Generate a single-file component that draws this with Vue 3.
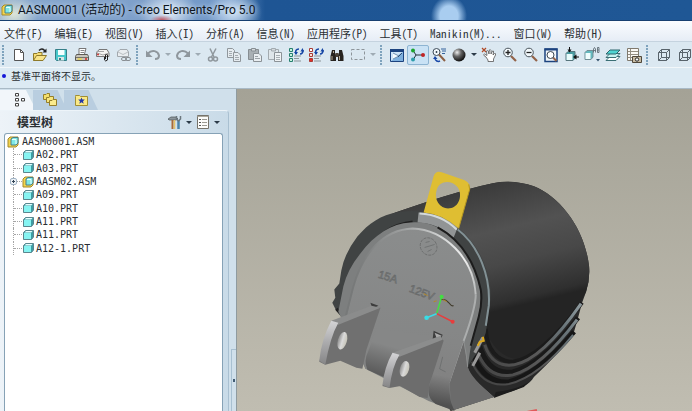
<script setup>
const menus = ['文件(F)', '编辑(E)', '视图(V)', '插入(I)', '分析(A)', '信息(N)', '应用程序(P)', '工具(T)', 'Manikin(M)...', '窗口(W)', '帮助(H)']

const fileTools = [
  ['new', '新建'], ['open', '打开'], ['save', '保存'], ['print', '打印'], ['mail', '发送邮件'], ['link', '发送链接'],
]
const editTools = [
  ['cut', '剪切'], ['copy', '复制'], ['paste', '粘贴'], ['pastex', '选择性粘贴'],
  ['regen', '再生'], ['regenm', '再生管理器'], ['find', '查找'], ['select', '选取'],
]
const viewTools = [
  ['repaint', '重画'], ['spin', '旋转中心'], ['orient', '定向模式'], ['shade', '外观库'],
]
const zoomTools = [
  ['pan', '平移'], ['zoomin', '放大'], ['zoomout', '缩小'], ['refit', '重新调整'],
  ['reorient', '重定向'], ['saved', '已命名视图'], ['layers', '层'], ['manager', '视图管理器'],
]

const parts = [
  { name: 'A02.PRT' }, { name: 'A03.PRT' }, { name: 'AASM02.ASM', asm: true },
  { name: 'A09.PRT' }, { name: 'A10.PRT' }, { name: 'A11.PRT' }, { name: 'A11.PRT' }, { name: 'A12-1.PRT' },
]
</script>

<template>
  <div class="window">
    <svg class="defs" aria-hidden="true">
      <symbol id="asm" viewBox="0 0 12 12">
        <path d="M1 3 3 1H11V9L9 11H1Z" fill="#f2d44c" stroke="#a58a2c" />
        <path d="M4 3 6 1.500H11V7L9 9H4Z" fill="#7fe9e6" stroke="#4a7f86" />
        <path d="M5 3.500H9V8" fill="none" stroke="#e8ffff" />
      </symbol>
      <symbol id="prt" viewBox="0 0 12 12">
        <path d="M1.500 3.500 3.500 1.500H11.500V8L9.500 10.500H1.500Z" fill="#3f9ca3" stroke="#5b868e" />
        <path d="M2 4H9V10H2Z" fill="#86f4f2" />
        <path d="M2.500 3.500 4 2H10.500L9.200 3.500Z" fill="#e4ffff" />
      </symbol>
      <symbol id="new" viewBox="0 0 16 16">
        <path d="M3.500 2.500H9.500L12.500 5.500V13.500H3.500Z" fill="#fff" stroke="#555" />
        <path d="M9.500 2.500V5.500H12.500" fill="none" stroke="#555" />
      </symbol>
      <symbol id="open" viewBox="0 0 16 16">
        <path d="M1.500 13.500V6.500H5L6 5.500H10V8" fill="#f6dd74" stroke="#8e7a2a" />
        <path d="M1.500 13.500 4.500 8.500H14.500L11 13.500Z" fill="#f8e489" stroke="#8e7a2a" />
        <path d="M7 3.500C9 1.500 11 1.500 13 4" fill="none" stroke="#222" stroke-width="1.500" />
        <path d="M14.500 1.500V5.500H10.500Z" fill="#222" />
      </symbol>
      <symbol id="save" viewBox="0 0 16 16">
        <path d="M2.500 2.500H13.500V13.500H3.500L2.500 12.500Z" fill="#47c8cb" stroke="#367f88" />
        <path d="M5 3H11.500V8H5Z" fill="#f4ffff" />
        <path d="M5 10H11V13.500H5Z" fill="#dce5e6" />
        <path d="M6 11H8V13H6Z" fill="#367f88" />
      </symbol>
      <symbol id="print" viewBox="0 0 16 16">
        <path d="M5 7V1.500H12L10.500 7" fill="#fff" stroke="#777" />
        <path d="M6.500 3.500H10.500M6.500 5.500H10" stroke="#888" />
        <path d="M2.500 7.500H13.500L14.500 9.500V13.500H1.500V9.500Z" fill="#c8c5bc" stroke="#5c5a55" />
        <path d="M2 10.500H14" stroke="#77736a" />
        <path d="M3.500 12H8" stroke="#e9d452" stroke-width="1.500" />
        <path d="M11 12H13" stroke="#d22" stroke-width="1.500" />
      </symbol>
      <symbol id="mail" viewBox="0 0 16 16">
        <path d="M1.500 9.500V6L4 2.500H12L14 6V9.500Z" fill="#f2f2f0" stroke="#777" />
        <path d="M2 6 8 8 14 6M1.500 4.500H9" fill="none" stroke="#a6a6a6" />
        <path d="M9.500 10V13Q10.500 15 12.500 13V8Q11.500 6 10.500 8V12" fill="none" stroke="#222" />
        <circle cx="3" cy="7.500" r="1" fill="#c33" />
      </symbol>
      <symbol id="link" viewBox="0 0 16 16">
        <path d="M1.500 9.500V5L4 2.500H11L12.500 5V9.500Z" fill="#e9edf0" stroke="#a2a8ad" />
        <path d="M2 5 7 7.500 12 5" fill="none" stroke="#b9bfc3" />
        <rect x="5.500" y="10.500" width="5" height="3" rx="1.500" fill="none" stroke="#898e92" />
        <rect x="9.500" y="10.500" width="5" height="3" rx="1.500" fill="none" stroke="#898e92" />
      </symbol>
      <symbol id="undo" viewBox="0 0 16 16">
        <path d="M3 6.500C7 2 13 4 14 8.500 14 11 12 12 10 12" fill="none" stroke="#8f979d" stroke-width="2" />
        <path d="M1 3.500V10H7.500Z" fill="#8f979d" />
      </symbol>
      <symbol id="redo" viewBox="0 0 16 16">
        <path d="M13 6.500C9 2 3 4 2 8.500 2 11 4 12 6 12" fill="none" stroke="#8f979d" stroke-width="2" />
        <path d="M15 3.500V10H8.500Z" fill="#8f979d" />
      </symbol>
      <symbol id="cut" viewBox="0 0 16 16">
        <path d="M5 1.500 9 10M11 1.500 6.500 10" stroke="#8f979d" stroke-width="1.500" />
        <circle cx="5.500" cy="12" r="2" fill="none" stroke="#8f979d" stroke-width="1.500" />
        <circle cx="10.500" cy="12" r="2" fill="none" stroke="#8f979d" stroke-width="1.500" />
      </symbol>
      <symbol id="copy" viewBox="0 0 16 16">
        <path d="M1.500 1.500H6.500L8.500 3.500V10.500H1.500Z" fill="#e6ecf0" stroke="#90979c" />
        <path d="M7.500 5.500H12L14.500 8V14.500H7.500Z" fill="#e6ecf0" stroke="#90979c" />
        <path d="M3 4.500H6M3 6.500H6M3 8.500H6M9 8.500H12M9 10.500H13M9 12.500H13" stroke="#a5acb1" />
      </symbol>
      <symbol id="paste" viewBox="0 0 16 16">
        <path d="M1.500 2.500H11.500V12.500H1.500Z" fill="#a9b0b4" stroke="#878e93" />
        <path d="M4.500 1.500H8.500V4H4.500Z" fill="#d5dade" stroke="#878e93" />
        <path d="M6.500 6.500H12L14.500 9V14.500H6.500Z" fill="#e9eef1" stroke="#8b9297" />
        <path d="M8 9.500H11M8 11.500H13" stroke="#9ca3a8" />
      </symbol>
      <symbol id="pastex" viewBox="0 0 16 16">
        <path d="M1.500 2.500H11.500V12.500H1.500Z" fill="#dfe6ea" stroke="#a3abb0" />
        <path d="M4.500 1.500H8.500V4H4.500Z" fill="#d5dade" stroke="#a3abb0" />
        <path d="M7.500 5.500H14.500V14.500H7.500Z" fill="#eef2f4" stroke="#8b9297" />
        <path d="M9 8.500H13M9 10.500H13M9 12.500H13" stroke="#a9b0b4" />
      </symbol>
      <symbol id="regen" viewBox="0 0 16 16">
        <path d="M1.500 1.500H4.500V4.500H1.500ZM1.500 6.500H4.500V9.500H1.500ZM1.500 11.500H4.500V14.500H1.500Z" fill="#c8f1df" stroke="#26806f" />
        <path d="M6 9H13M6 11.500H11M6 14H13" stroke="#8d9599" />
        <path d="M8 7C7 4 8 2 11 2M15 3C15 6 14 7 12 7" fill="none" stroke="#1646a5" stroke-width="1.600" />
        <path d="M6 5H10L8 8ZM12.500 4.500H16L14.500 1Z" fill="#1646a5" />
      </symbol>
      <symbol id="regenm" viewBox="0 0 16 16">
        <path d="M1.500 1.500H4.500V4.500H1.500Z" fill="#fff" stroke="#aa3b34" />
        <path d="M1.500 6.500H4.500V9.500H1.500Z" fill="#fbe0d9" stroke="#aa3b34" />
        <path d="M1.500 11.500H4.500V14.500H1.500Z" fill="#e42e27" stroke="#aa3b34" />
        <path d="M6 9H13M6 11.500H11M6 14H13" stroke="#8d9599" />
        <path d="M8 7C7 4 8 2 11 2M15 3C15 6 14 7 12 7" fill="none" stroke="#1646a5" stroke-width="1.600" />
        <path d="M6 5H10L8 8ZM12.500 4.500H16L14.500 1Z" fill="#1646a5" />
      </symbol>
      <symbol id="find" viewBox="0 0 16 16">
        <path d="M3 3H6V6L7 8V14H1.500V9ZM10 3H13L14.500 9V14H9V8L10 6Z" fill="#27231f" />
        <path d="M6.500 6H9.500V10H6.500Z" fill="#4b4238" />
        <path d="M3 9V13M10.500 9V13M4.500 4V6" stroke="#b8ab93" />
      </symbol>
      <symbol id="select" viewBox="0 0 16 16">
        <path d="M1.500 2.500H14.500V12.500H1.500Z" fill="none" stroke="#8d959a" stroke-dasharray="3 2" />
      </symbol>
      <symbol id="repaint" viewBox="0 0 16 16">
        <path d="M1.500 2.500H14.500V14.500H1.500Z" fill="#cfe4f7" stroke="#1c437f" />
        <path d="M1 2H15V5H1Z" fill="#1c437f" />
        <path d="M2 14 12 6 14 5V14Z" fill="#7eb0de" />
        <path d="M4 6 10 9 4 12" fill="#f6fbff" stroke="#6f8faf" />
        <path d="M9 10 13 6" stroke="#2e4c71" />
      </symbol>
      <symbol id="spin" viewBox="0 0 16 16">
        <path d="M3 3.500 6 8 3 13M6 8H13" fill="none" stroke="#28343c" />
        <circle cx="3" cy="3.500" r="2" fill="#1aa42d" />
        <circle cx="3" cy="12.500" r="2" fill="#2d9daa" />
        <circle cx="13" cy="8" r="2" fill="#c02425" />
      </symbol>
      <symbol id="orient" viewBox="0 0 16 16">
        <circle cx="5.500" cy="5" r="3.500" fill="#f2f8fc" stroke="#3e4c59" />
        <path d="M5.500 4V6M4.500 5H6.500" stroke="#3e4c59" />
        <path d="M8 7.500 14 14" stroke="#8c6044" stroke-width="2" />
        <path d="M10 2H15M11 4H15M11 6.500H14" stroke="#35639c" />
        <path d="M4 11C4 14 7 15 9 14" fill="none" stroke="#1747a8" stroke-width="1.500" />
        <path d="M2 12 4 9 6.500 12Z" fill="#1747a8" />
      </symbol>
      <radialGradient id="ballfill" cx=".35" cy=".3" r=".7">
        <stop offset="0" stop-color="#eee" /><stop offset=".45" stop-color="#666" /><stop offset="1" stop-color="#111" />
      </radialGradient>
      <symbol id="shade" viewBox="0 0 16 16"><circle cx="8" cy="8" r="6.500" fill="url(#ballfill)" /></symbol>
      <symbol id="pan" viewBox="0 0 16 16">
        <path d="M1 1 5 5M5 1 1 5" stroke="#b04a26" stroke-width="1.200" />
        <path d="M5 10 3 8.500Q2 7.500 3.500 7L6 8.500 5.500 4Q6.500 3 7.200 4L8 7 8.300 3Q9.500 2 10 3.500V7L11.500 4Q12.700 3.500 12.600 5L12 8 13.500 6.500Q15 6 14.500 8L12.500 12V14.500H7V13Z" fill="#fff" stroke="#555" stroke-width=".8" />
      </symbol>
      <symbol id="zoomin" viewBox="0 0 16 16">
        <path d="M9 9 14 14" stroke="#936349" stroke-width="2.200" />
        <circle cx="6" cy="5.500" r="4.300" fill="#f3f9fc" stroke="#4a545c" />
        <path d="M3.500 5.500H8.500M6 3V8" stroke="#222" stroke-width="1.300" />
      </symbol>
      <symbol id="zoomout" viewBox="0 0 16 16">
        <path d="M9 9 14 14" stroke="#936349" stroke-width="2.200" />
        <circle cx="6" cy="5.500" r="4.300" fill="#f3f9fc" stroke="#4a545c" />
        <path d="M3.500 5.500H8.500" stroke="#222" stroke-width="1.300" />
      </symbol>
      <symbol id="refit" viewBox="0 0 16 16">
        <path d="M2 2H14V14.500H2Z" fill="#f1f6fa" stroke="#1c437f" stroke-width="1.500" />
        <path d="M1.500 2.500H14.500" stroke="#1c437f" stroke-width="2" />
        <path d="M9.500 10 13.500 14" stroke="#936349" stroke-width="2" />
        <circle cx="7.500" cy="8" r="3.500" fill="#fff" stroke="#3b4651" />
      </symbol>
      <symbol id="reorient" viewBox="0 0 16 16">
        <path d="M2 6.500 4 4.500H11V11L9 13.500H2Z" fill="#4a9ca2" stroke="#57757c" />
        <path d="M2.500 7H8.500V13H2.500Z" fill="#e8fbfb" />
        <path d="M5.500 0V3M15 10H12" stroke="#111" />
        <path d="M3.500 2.500H7.500L5.500 5.500ZM12.500 7.500V12.500L9 10Z" fill="#111" />
      </symbol>
      <symbol id="saved" viewBox="0 0 16 16">
        <path d="M1 5.500 3 3.500H9V10L7 12.500H1Z" fill="#63b9be" stroke="#728c93" />
        <path d="M1.500 6H6.500V12H1.500Z" fill="#f0fdfd" />
        <path d="M9.500 5.500V2L10.500 .500 11.500 2V5.500M9.500 3.500H11.500M13.500 .500V5.500H15V3H13.500M13.500 .500H15V3" fill="none" stroke="#54616a" stroke-width=".8" />
        <path d="M12 12H16L14 14.500Z" fill="#35536c" />
      </symbol>
      <symbol id="layers" viewBox="0 0 16 16">
        <path d="M1 13.500 5 9.500H15L11 13.500Z" fill="#fff" stroke="#3b6f75" />
        <path d="M1 10.500 5 6.500H15L11 10.500Z" fill="#c6f3f1" stroke="#3b6f75" />
        <path d="M1 7 5 3H15L11 7Z" fill="#4fd4d1" stroke="#2e666c" />
      </symbol>
      <symbol id="manager" viewBox="0 0 16 16">
        <path d="M1.500 1.500H12.500V13.500H1.500Z" fill="#fbfaf6" stroke="#807a6e" />
        <path d="M2 4.500H12M2 7.500H12M2 10.500H12M4.500 2V13" stroke="#948e82" />
        <path d="M6.500 9.500H15.500V15.500H6.500Z" fill="#c9bda4" stroke="#50483b" />
        <circle cx="11" cy="12.500" r="1.700" fill="#fff" stroke="#222" />
      </symbol>
      <symbol id="wire" viewBox="0 0 16 16">
        <path d="M2.500 5.500H10.500V13.500H2.500ZM5.500 2.500H13.500V10.500H5.500ZM2.500 5.500 5.500 2.500M10.500 5.500 13.500 2.500M10.500 13.500 13.500 10.500M2.500 13.500 5.500 10.500" fill="none" stroke="#58636b" />
      </symbol>
      <symbol id="tree" viewBox="0 0 16 16">
        <path d="M4.500 1.500H7.500V4H4.500ZM4.500 6.500H7.500V9H4.500ZM4.500 11.500H7.500V14H4.500ZM10.500 6.500H13.500V9H10.500Z" fill="#fff" stroke="#444" />
      </symbol>
      <symbol id="folders" viewBox="0 0 16 16">
        <path d="M1.500 2.500H4L5 1.500H7.500V7.500H1.500Z" fill="#f4df6a" stroke="#957f2c" />
        <path d="M4.500 5.500H7L8 4.500H11.500V10.500H4.500Z" fill="#f8e67c" stroke="#957f2c" />
        <path d="M7.500 8.500H10L11 7.500H14.500V13.500H7.500Z" fill="#fbeb8d" stroke="#957f2c" />
      </symbol>
      <symbol id="fav" viewBox="0 0 16 16">
        <path d="M2.500 4.500V3.500H6.500L7.500 4.500H14.500V13.500H2.500Z" fill="#fae987" stroke="#a08e35" />
        <path d="M8.500 5.500 9.400 7.600H11.800L10 9.200 10.700 11.700 8.500 10.300 6.300 11.700 7 9.200 5.200 7.600H7.600Z" fill="#2338a8" />
      </symbol>
      <symbol id="settings" viewBox="0 0 16 16">
        <path d="M1 5 4 3H9L11 5 9 6H2Z" fill="#8d969c" stroke="#4b5358" stroke-width=".7" />
        <path d="M5.500 6V15" stroke="#a86a3b" stroke-width="2" />
        <path d="M7.500 6V15" stroke="#e6c269" stroke-width="1.500" />
        <path d="M11.500 6V15" stroke="#4a84ad" stroke-width="2.500" />
        <path d="M9.500 2V5L11.500 7 13.500 5V2" fill="none" stroke="#6c777e" stroke-width="1.500" />
      </symbol>
      <symbol id="show" viewBox="0 0 16 16">
        <path d="M2.500 1.500H13.500V14.500H2.500Z" fill="#fcfcfa" stroke="#76736a" />
        <path d="M2.500 2.500H13.500" stroke="#aca99e" />
        <path d="M4 5.500H6M4 8.500H6M4 11.500H6" stroke="#555" />
        <path d="M7 5.500H12M7 8.500H12M7 11.500H12" stroke="#9c9a92" />
      </symbol>
    </svg>

    <header class="titlebar">
      <svg class="small"><use href="#asm" /></svg>
      <h1>AASM0001 (活动的) - Creo Elements/Pro 5.0</h1>
    </header>

    <nav class="menubar">
      <button v-for="m in menus" :key="m" type="button">{{ m }}</button>
    </nav>

    <div class="toolbar" role="toolbar">
      <i class="grip"></i>
      <div class="group six">
        <button v-for="[id, label] in fileTools" :key="id" type="button" :aria-label="label"><svg><use :href="'#' + id" /></svg></button>
      </div>
      <i class="grip"></i>
      <div class="group history">
        <button type="button" aria-label="撤消"><svg><use href="#undo" /></svg></button>
        <button class="drop dim" type="button" aria-label="撤消列表"></button>
        <button type="button" aria-label="重做"><svg><use href="#redo" /></svg></button>
        <button class="drop dim" type="button" aria-label="重做列表"></button>
      </div>
      <div class="group eight">
        <button v-for="[id, label] in editTools" :key="id" type="button" :aria-label="label"><svg><use :href="'#' + id" /></svg></button>
      </div>
      <button class="drop dim" type="button" aria-label="选取方式"></button>
      <i class="grip"></i>
      <div class="group four">
        <button v-for="[id, label] in viewTools" :key="id" type="button" :aria-label="label" :class="{ active: id === 'spin' }"><svg><use :href="'#' + id" /></svg></button>
      </div>
      <button class="drop" type="button" aria-label="外观列表"></button>
      <div class="group eight">
        <button v-for="[id, label] in zoomTools" :key="id" type="button" :aria-label="label"><svg><use :href="'#' + id" /></svg></button>
      </div>
      <i class="grip"></i>
      <div class="group two">
        <button type="button" aria-label="线框"><svg><use href="#wire" /></svg></button>
        <button type="button" aria-label="隐藏线"><svg><use href="#wire" /></svg></button>
      </div>
    </div>

    <p class="message"><i></i>基准平面将不显示。</p>

    <main class="work">
      <aside class="sidebar">
        <div class="tabs" role="tablist">
          <button class="tab on" type="button" role="tab" aria-label="模型树"><svg><use href="#tree" /></svg></button>
          <button class="tab" type="button" role="tab" aria-label="文件夹"><svg><use href="#folders" /></svg></button>
          <button class="tab" type="button" role="tab" aria-label="收藏夹"><svg><use href="#fav" /></svg></button>
        </div>
        <div class="panel">
          <div class="panel-head">
            <h2>模型树</h2>
            <button class="tool" type="button" aria-label="设置"><svg><use href="#settings" /></svg><i class="caret"></i></button>
            <button class="tool" type="button" aria-label="显示"><svg><use href="#show" /></svg><i class="caret"></i></button>
          </div>
          <div class="treebox">
            <ul class="tree">
              <li class="root"><svg class="small"><use href="#asm" /></svg>AASM0001.ASM</li>
              <li v-for="(p, i) in parts" :key="i" class="leaf" :class="{ asm: p.asm }">
                <button v-if="p.asm" class="plus" type="button" aria-label="展开"></button>
                <svg class="small"><use :href="p.asm ? '#asm' : '#prt'" /></svg>{{ p.name }}
              </li>
            </ul>
          </div>
        </div>
        <div class="sash"><i></i></div>
      </aside>

      <section class="viewport">
        <svg viewBox="237 90 455 321" preserveAspectRatio="xMinYMin slice">
          <defs>
            <linearGradient id="barrel" gradientUnits="userSpaceOnUse" x1="490" y1="180" x2="530" y2="345">
              <stop offset="0" stop-color="#393939" /><stop offset=".3" stop-color="#525252" />
              <stop offset=".5" stop-color="#484848" /><stop offset=".72" stop-color="#2f2f2f" />
              <stop offset=".76" stop-color="#242424" /><stop offset="1" stop-color="#242424" />
            </linearGradient>
            <linearGradient id="face" gradientUnits="userSpaceOnUse" x1="410" y1="220" x2="400" y2="400">
              <stop offset="0" stop-color="#8b8d8d" /><stop offset=".7" stop-color="#858686" /><stop offset="1" stop-color="#7c7c7c" />
            </linearGradient>
            <linearGradient id="base" gradientUnits="userSpaceOnUse" x1="440" y1="340" x2="428" y2="402">
              <stop offset="0" stop-color="#858686" /><stop offset=".55" stop-color="#828282" /><stop offset="1" stop-color="#505050" />
            </linearGradient>
            <linearGradient id="knuckle" gradientUnits="userSpaceOnUse" x1="385" y1="345" x2="376" y2="378">
              <stop offset="0" stop-color="#868787" /><stop offset="1" stop-color="#555" />
            </linearGradient>
            <linearGradient id="tip" x1="0" y1="0" x2="0" y2="1">
              <stop offset="0" stop-color="#d4d4d6" /><stop offset=".5" stop-color="#aaaaac" /><stop offset="1" stop-color="#858586" />
            </linearGradient>
            <linearGradient id="bore" x1="0" y1="0" x2="1" y2="0">
              <stop offset="0" stop-color="#8e8e8e" /><stop offset=".5" stop-color="#dadada" /><stop offset="1" stop-color="#c6c4b8" />
            </linearGradient>
            <linearGradient id="rib" gradientUnits="userSpaceOnUse" x1="480" y1="375" x2="580" y2="310">
              <stop offset="0" stop-color="#444" /><stop offset=".5" stop-color="#5a5a5a" /><stop offset=".8" stop-color="#69757a" /><stop offset="1" stop-color="#8b979b" />
            </linearGradient>
            <linearGradient id="edge" gradientUnits="userSpaceOnUse" x1="352" y1="290" x2="475" y2="310">
              <stop offset="0" stop-color="#777979" /><stop offset=".35" stop-color="#a2a4a4" /><stop offset=".65" stop-color="#d4d6d6" />
              <stop offset=".85" stop-color="#efefef" /><stop offset="1" stop-color="#b3b5b5" />
            </linearGradient>
          </defs>

          <!-- barrel and ribbed skirt -->
          <path d="M392 214C425 203 460 191 492 184Q512 180 533 187C560 198 584 230 588 267Q589 280 585 292L581 303 577 318 573 332Q560 352 533 377C527 388 508 392 493 397L450 411 400 330Z" fill="#292929" />
          <path d="M392 214C425 203 460 191 492 184Q512 180 533 187C560 198 584 230 588 267Q589 280 585 292C572 318 550 350 525 359Q500 363 486 334L470 300 420 230Z" fill="url(#barrel)" />
          <g fill="none">
            <path d="M485 329C486 349 496 362 512 362Q540 358 581 303" stroke="#1b1b1b" stroke-width="4" />
            <path d="M478 344C484 364 495 375 512 372Q540 365 577 318" stroke="#191919" stroke-width="5" />
            <path d="M473 356C480 374 492 383 508 382Q538 374 573 332" stroke="#161616" stroke-width="5" />
            <path d="M484 345C489 361 500 367 513 365Q541 360 580 304" stroke="url(#rib)" stroke-width="3" />
            <path d="M478 355C485 371 496 378 512 375Q540 368 576 320" stroke="url(#rib)" stroke-width="3" />
            <path d="M471 362C478 378 490 387 508 384Q538 377 572 335" stroke="url(#rib)" stroke-width="2" />
          </g>
          <path d="M493 398 495 392Q515 390 528 382L523 387Z" fill="#1c1c1c" />

          <!-- dark rim -->
          <path d="M342 316 336 311 332 303 335 298 334 290 339 284 341 271Q344 254 357 237C368 224 381 215 397 213Q419 209 437 217C459 225 475 243 483 263Q492 285 489 305L485 333 480 347 467 367 440 300Z" fill="#404343" />
          <path d="M336 309 342 316 347 287" fill="none" stroke="#222" stroke-width="3" />
          <path d="M346 287Q350 270 361 256C375 236 391 224 412 222" fill="none" stroke="#202020" stroke-width="2" />
          <path d="M457 230C478 246 490 277 488 306L485 326" fill="none" stroke="#829195" stroke-width="2" />
          <path d="M418 213Q441 213 457 228L453 238Q438 224 417 223Z" fill="#919495" />
          <path d="M419 214Q441 215 456 230" fill="none" stroke="#d3d9da" stroke-width="2" />
          <path d="M474 353 482 338M472 366 479 353" stroke="#999" stroke-width="3" />
          <path d="M477 346 479 342 483 341 482 337" fill="none" stroke="#dda91c" stroke-width="2" />

          <!-- front face -->
          <path d="M338 312 343 287Q347 270 360 254C374 235 391 224 410 223Q426 222 437 228C461 241 474 263 479 289Q481 302 478 316L470 347 467 367Q468 374 474 380L493 397 452 410 428 401 365 369Z" fill="#7d7f7f" />
          <path d="M347 315 353 287C362 255 382 230 412 229 443 230 473 258 475 295Q475 308 463 341L448 385 365 369Z" fill="url(#face)" />
          <path d="M345 318 353 287C362 255 382 230 412 229 443 230 473 258 475 295" fill="none" stroke="url(#edge)" stroke-width="2" />
          <path d="M475 295Q475 308 463 341L449 383" fill="none" stroke="#acaeae" stroke-width="2" />
          <path d="M437 228C461 241 474 263 480 290Q482 302 478 317L470 346" fill="none" stroke="#1c1c1c" stroke-width="2" />
          <path d="M463 342 467 367Q470 378 493 397L452 410Q449 397 449 383Z" fill="#6b6b6b" />
          <path d="M463 341Q466 355 467 367" stroke="#8d8f8f" fill="none" />
          <path d="M443 338 463 341 449 383Q448 400 454 411L435 404Q427 399 428 388Z" fill="url(#base)" />
          <path d="M376 329 438 337 430 350 392 355 383 377 367 370Q363 361 368 351Z" fill="url(#knuckle)" />

          <!-- engraved markings -->
          <g fill="none" stroke="#666868" stroke-width=".7">
            <ellipse cx="428" cy="247" rx="8" ry="9" transform="rotate(-35 428 247)" stroke-dasharray="3 1" />
            <path d="M424 248 434 245M425 243 429 242M427 252 431 250" />
            <path d="M442 357 439 369 445 372" />
          </g>
          <g class="engraved">
            <text x="377" y="278" transform="rotate(17 377 278)">15A</text>
            <text x="408" y="292" transform="rotate(20 408 292)">125V</text>
          </g>
          <path d="M440 300Q445 299 448 303T453 306" fill="none" stroke="#403b2b" />
          <path d="M423 294 427 296M433 302 436 301M442 300 446 302" stroke="#b58a28" />

          <!-- blades -->
          <path d="M370 303 378 306 372 309ZM433 331 442 335 440 341 432 340Z" fill="#3d3d3d" />
          <path d="M434 333 441 336 437 341Z" fill="#aaa" />
          <path d="M331 322 372 307 380 308 366 350 362 369 356 368 340 361 325 365 319 362Z" fill="#707070" />
          <path d="M331 321 371 306 380 308 338 325Z" fill="#8b8c8c" />
          <path d="M331 321 338 323Q330 337 325 365L319 361Q321 340 331 321Z" fill="url(#tip)" />
          <ellipse cx="342" cy="341" rx="4.500" ry="9" transform="rotate(16 342 341)" fill="url(#bore)" />
          <path d="M392 354 440 337 443 341 429 384 427 398 419 397 400 386 389 388 382 386Z" fill="#6d6d6d" />
          <path d="M392 353 440 336 442 340 399 357Z" fill="#8c8d8d" />
          <path d="M392 353 399 355Q392 366 389 388L382 385Q384 367 392 353Z" fill="url(#tip)" />
          <ellipse cx="404" cy="369" rx="4.500" ry="8" transform="rotate(16 404 369)" fill="url(#bore)" />

          <!-- terminal tab -->
          <path fill-rule="evenodd" d="M423 213 433 177Q435 171 441 173L464 181Q470 184 469 190L458 229Q441 214 423 213ZM436 191C433 201 440 210 449 209 459 208 462 195 457 188 451 180 438 181 436 191Z" fill="#dfbe32" />
          <path d="M468 185 469 190 458 229" fill="none" stroke="#b29522" />

          <!-- orientation triad -->
          <g stroke-width="1.500">
            <path d="M436 314 441 297" stroke="#43df43" />
            <path d="M436 314 452 322" stroke="#e73d3d" />
            <path d="M436 314 426 318" stroke="#39dce6" />
          </g>
          <circle cx="441" cy="297" r="2" fill="#43df43" />
          <circle cx="452" cy="322" r="2" fill="#e73d3d" />
          <circle cx="426" cy="318" r="2.300" fill="#39dce6" />
          <path d="M526 412 536 410" stroke="#df5a5a" stroke-width="2" />
        </svg>
      </section>
    </main>
  </div>
</template>

<style>
body { margin: 0; }
</style>

<style scoped>
.window {
  display: flex;
  flex-direction: column;
  height: 100vh;
  overflow: hidden;
  background: #dbe8f1;
  color: #2a2f33;
  font-family: "Noto Sans CJK SC", sans-serif;
}
.defs { position: absolute; width: 0; height: 0; }
button { padding: 0; border: 0; background: none; color: inherit; font: inherit; }
h1, h2, p, ul { margin: 0; padding: 0; font-weight: 400; }
svg { display: block; flex: none; }
.small { width: 12px; height: 12px; }

.titlebar {
  display: flex;
  align-items: center;
  gap: 5px;
  height: 20px;
  padding-left: 1px;
  border-bottom: 1px solid #173f70;
  overflow: hidden;
  background:
    radial-gradient(ellipse 18px 20px at 449px 16px, #a9cdf0 50%, transparent),
    radial-gradient(ellipse 12px 5px at 162px 20px, #bb5663, transparent),
    radial-gradient(ellipse 30px 22px at 168px 12px, #e3edf7, transparent),
    radial-gradient(ellipse 28px 22px at 234px 12px, #cfe1f3, transparent),
    radial-gradient(ellipse 24px 20px at 14px 14px, #dde5d8, transparent),
    linear-gradient(90deg, #89a9cf, #7d9fca 150px, #6f97c8 230px, #1e5594 265px, #1f5795);
}
.titlebar h1 {
  color: #0c1420;
  font: 12px/18px Roboto, "Noto Sans CJK SC", sans-serif;
  white-space: nowrap;
  text-shadow: 0 0 5px #dce9f5;
}

.menubar {
  display: flex;
  gap: 12px;
  height: 20px;
  padding-left: 4px;
  border-bottom: 1px solid #c5d3df;
  background: linear-gradient(#fafcfe, #e6edf6);
}
.menubar button {
  flex: none;
  font-size: 11px;
  line-height: 24px;
  font-feature-settings: "hwid";
}

.toolbar {
  display: flex;
  align-items: center;
  height: 25px;
  border-bottom: 1px solid #f2f7fa;
  background: #dbe8f1;
  overflow: hidden;
}
.grip {
  flex: none;
  width: 3px;
  height: 20px;
  margin: 0 4px 0 2px;
  background: repeating-linear-gradient(#7fa3bd 0 2px, transparent 2px 3px);
  background-size: 2px 3px;
  background-repeat: repeat-y;
}
.group { display: flex; flex: none; }
.group button { flex: 1; height: 20px; display: grid; place-items: center; }
.group svg { width: 16px; height: 16px; }
.six { width: 125px; }
.four { width: 82px; }
.eight { width: 165px; }
.two { width: 42px; }
.history { width: 60px; }
.group .drop, .drop { flex: none; width: 10px; height: 20px; display: grid; place-items: center; }
.drop::before, .caret {
  content: "";
  border: 3px solid transparent;
  border-top-color: #2c3b48;
  border-bottom: 0;
}
.dim::before { border-top-color: #9fabb4; }
.group .active {
  border: 1px solid #8db4d2;
  border-radius: 2px;
  background: #c9e2f5;
}

.message {
  display: flex;
  align-items: center;
  gap: 5px;
  height: 16px;
  padding: 0 2px 4px;
  border-bottom: 1px solid #a9bac6;
  background: #dceaf3;
  font-size: 10px;
  line-height: 14px;
}
.message i { width: 4px; height: 4px; border-radius: 50%; background: #1417d8; }

.work { display: flex; flex: 1; min-height: 0; }
.sidebar {
  display: grid;
  grid-template: auto 1fr / 1fr 7px;
  flex: none;
  width: 236px;
  border-right: 1px solid #8f9b9f;
  background: #d0e0eb;
}
.tabs { grid-column: 1 / 3; display: flex; height: 20px; padding-top: 1px; }
.tab {
  width: 34px;
  padding: 0 10px 0 9px;
  display: grid;
  place-items: center;
  background: #b9cee0;
  clip-path: polygon(0 0, 72% 0, 100% 100%, 0 100%);
}
.tab + .tab { margin-left: -3px; }
.tab.on { width: 36px; background: #f2f6fa; padding-right: 7px; }
.tab svg { width: 16px; height: 16px; }
.panel {
  display: flex;
  flex-direction: column;
  min-height: 0;
  padding: 0 5px 0 4px;
  border-top: 1px solid #edf4f9;
  border-right: 1px solid #a9c0d1;
  border-top-right-radius: 4px;
  background: linear-gradient(90deg, #edf3f8, #c9dbe8);
}
.panel-head { display: flex; align-items: center; height: 22px; padding: 0 0 0 13px; }
.panel-head h2 { flex: 1; font-size: 12px; line-height: 18px; font-weight: 700; }
.tool { display: flex; align-items: center; gap: 3px; width: 28px; }
.tool svg { width: 16px; height: 16px; }
.treebox {
  flex: 1;
  min-height: 0;
  border: 1px solid #86a2b6;
  border-bottom: 0;
  border-radius: 3px 3px 0 0;
  background: #fff;
}
.tree {
  display: grid;
  grid-template-rows: repeat(9, 1fr);
  height: 120px;
  padding: 1px 0 0 2px;
  list-style: none;
  font: 10px/13px "DejaVu Sans Mono", monospace;
}
.tree li { display: flex; align-items: center; gap: 3px; min-height: 0; }
.tree .leaf {
  position: relative;
  gap: 2px;
  margin-left: 6px;
  padding-left: 8px;
  border-left: 1px dotted #a5a5a5;
}
.leaf::before { content: ""; position: absolute; left: 0; width: 8px; border-top: 1px dotted #a5a5a5; }
.plus {
  position: absolute;
  left: -4px;
  width: 7px;
  height: 7px;
  border: 1px solid #9fb2c4;
  border-radius: 2px;
  background:
    linear-gradient(#345, #345) center / 3px 1px no-repeat,
    linear-gradient(#345, #345) center / 1px 3px no-repeat,
    #eef3f7;
}
.sash {
  align-self: end;
  display: grid;
  place-items: center end;
  height: 61px;
  margin-left: 2px;
  padding-right: 1px;
  border-top: 1px solid #a8c0d1;
  border-left: 1px solid #a8c0d1;
}
.sash i { width: 2px; height: 3px; background: #415c74; }

.viewport { flex: 1; min-width: 0; background: linear-gradient(#a4a296, #c0bdb1); }
.viewport svg { width: 100%; height: 100%; }
.engraved { fill: none; stroke: #6a6c6c; stroke-width: .7px; font: 11px "Liberation Sans", sans-serif; }
</style>
